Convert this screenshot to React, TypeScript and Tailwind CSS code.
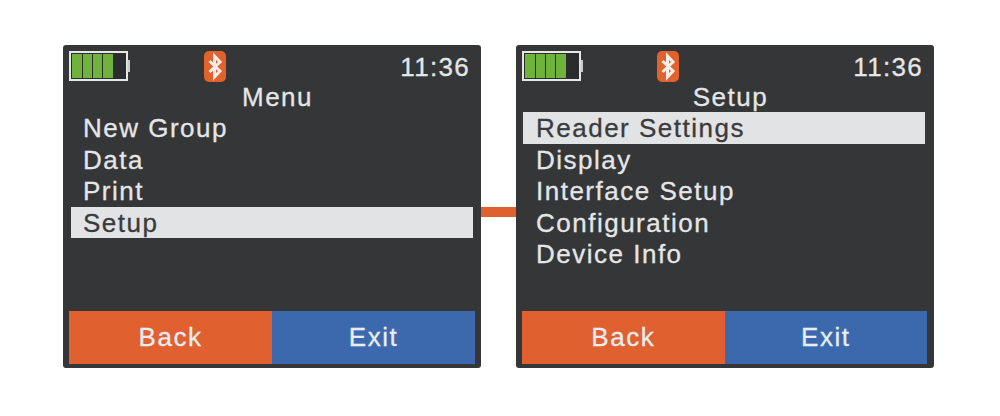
import React from "react";

type ScreenProps = {
  title: string;
  items: string[];
  selected: string;
  rowClass: string;
  footerClass: string;
};

const Battery = () => (
  <svg width="61" height="31" viewBox="0 0 61 31" className="block">
    <rect x="1" y="1" width="57" height="28" fill="#2b2c2d" stroke="#e6e8e6" strokeWidth="2" />
    <rect x="58.5" y="9" width="3" height="12" fill="#c9cbc9" />
    <rect x="3" y="3" width="10" height="24" fill="#6fb23c" />
    <rect x="14" y="3" width="9" height="24" fill="#6fb23c" />
    <rect x="24" y="3" width="9" height="24" fill="#6fb23c" />
    <rect x="34" y="3" width="10" height="24" fill="#6fb23c" />
  </svg>
);

const BluetoothBadge = () => (
  <svg width="22" height="31" viewBox="0 0 22 31" className="block">
    <rect x="0" y="0" width="22" height="31" rx="5" fill="#e2622e" />
    <path d="M5.5 10 L16 20 L10.5 26 L10.5 5 L16 11 L5.5 21" fill="none" stroke="#f6efe9" strokeWidth="3" />
  </svg>
);

const Screen = ({ title, items, selected, rowClass, footerClass }: ScreenProps) => (
  <div className="w-[418px] h-[323px] shrink-0 bg-[#353637] rounded-[3px] flex flex-col pt-[6px] px-[6px] pb-[4px] text-[#e4e6e7] tracking-[1.5px] [-webkit-text-stroke:0.3px]">
    <div className="flex h-[31px] items-start">
      <Battery />
      <div className="ml-[74px]">
        <BluetoothBadge />
      </div>
      <span className="ml-auto mr-[5px] text-[26px] leading-[31px] mt-[1px] tracking-[1.3px]">11:36</span>
    </div>
    <div className="h-[29px] mt-[1px] pl-[11px] text-center text-[26px] leading-[29px]">{title}</div>
    <ul className="flex flex-col h-[190px]">
      {items.map((item) => (
        <li
          key={item}
          className={
            item === selected
              ? `${rowClass} w-[402px] h-[31.6px] text-[26px] leading-[33.6px] bg-[#e1e3e5] text-[#3a3b3c]`
              : `${rowClass} w-[402px] h-[31.6px] text-[26px] leading-[33.6px]`
          }
        >
          {item}
        </li>
      ))}
    </ul>
    <div className={`flex mt-auto h-[53px] text-[26px] text-[#e8edf2] ${footerClass}`}>
      <div className="flex-1 flex items-center justify-center bg-[#e1602f]">Back</div>
      <div className="flex-1 flex items-center justify-center bg-[#3c69ae]">Exit</div>
    </div>
  </div>
);

export default function App() {
  return (
    <div
      className="w-[1000px] h-[416px] bg-white flex items-start pl-[63px] pt-[45px] overflow-hidden"
      style={{ fontFamily: '"Liberation Sans", Arial, sans-serif' }}
    >
      <Screen
        title="Menu"
        items={["New Group", "Data", "Print", "Setup"]}
        selected="Setup"
        rowClass="ml-[2px] pl-[12px]"
        footerClass="w-[406px]"
      />
      <div className="w-[35px] h-[10px] mt-[162px] bg-[#e1602f]" />
      <Screen
        title="Setup"
        items={["Reader Settings", "Display", "Interface Setup", "Configuration", "Device Info"]}
        selected="Reader Settings"
        rowClass="ml-[1px] pl-[13px]"
        footerClass="w-[405px]"
      />
    </div>
  );
}
